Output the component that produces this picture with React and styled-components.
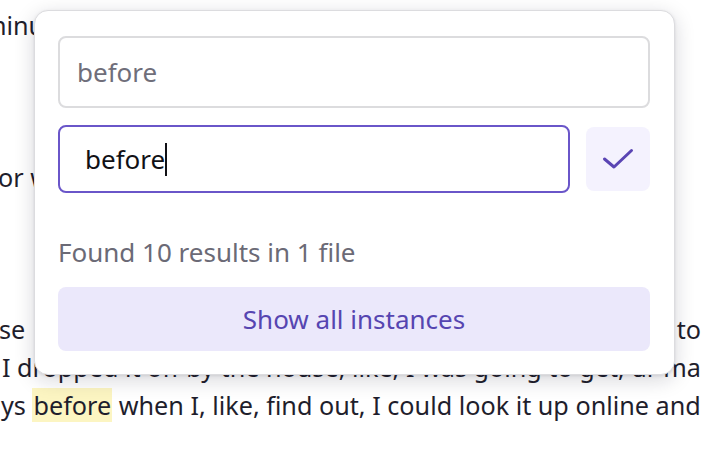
import React from 'react';
import styled, { createGlobalStyle } from 'styled-components';

const GlobalStyle = createGlobalStyle`
    html, body {
        margin: 0;
        padding: 0;
        background: #ffffff;
        overflow: hidden;
    }
    body {
        font-family: 'Noto Sans', 'Open Sans', sans-serif;
    }
`;

const Page = styled.div`
    position: relative;
    width: 706px;
    height: 460px;
    overflow: hidden;
    background: #ffffff;
`;

const Doc = styled.div`
    margin-top: -38px;
    font-size: 25.2px;
    line-height: 38px;
    color: #1f1e2c;
`;

const Line = styled.div`
    display: flex;
    justify-content: space-between;
    white-space: nowrap;
    height: ${(p) => p.$h || 38}px;
    margin-left: ${(p) => p.$shift || 0}px;
    padding-right: ${(p) => p.$end || 0}px;
`;

const Clip = styled.span`
    flex: 1;
    overflow: hidden;
    margin-right: 8px;
`;

const Mark = styled.span`
    background: #fcf5c2;
    padding: 0 1px;
`;

const Popover = styled.div`
    position: absolute;
    top: 10px;
    left: 34px;
    width: 641px;
    box-sizing: border-box;
    padding: 25px 24px 23px 23px;
    background: #ffffff;
    border: 1px solid #dcdcdf;
    border-radius: 14px;
    box-shadow: 0 5px 20px rgba(20, 20, 40, 0.17), 0 1px 3px rgba(20, 20, 40, 0.1);
    display: flex;
    flex-direction: column;
`;

const Field = styled.div`
    box-sizing: border-box;
    height: ${(p) => p.$height}px;
    flex: ${(p) => (p.$grow ? '1 1 auto' : 'none')};
    display: flex;
    align-items: center;
    padding-left: ${(p) => p.$pad}px;
    border: 2px solid ${(p) => (p.$active ? '#6a56c9' : '#dcdcde')};
    border-radius: 8px;
    font-size: 26px;
    color: ${(p) => (p.$placeholder ? '#6f6e7a' : '#111116')};
`;

const Caret = styled.span`
    display: inline-block;
    width: 2px;
    height: 33px;
    background: #111116;
`;

const Row = styled.div`
    display: flex;
    align-items: center;
    gap: 16px;
    margin-top: 17px;
`;

const CheckButton = styled.button`
    width: 64px;
    height: 64px;
    flex: none;
    border: none;
    border-radius: 8px;
    background: #f4f2fe;
    display: flex;
    align-items: center;
    justify-content: center;
    padding: 0;
`;

const Summary = styled.div`
    margin-top: 43px;
    margin-bottom: 19px;
    line-height: 32px;
    font-size: 26px;
    color: #6b6a76;
`;

const ShowAll = styled.button`
    height: 64px;
    flex: none;
    border: none;
    border-radius: 8px;
    background: #ebe8fb;
    color: #5645b1;
    font-family: inherit;
    font-size: 26px;
`;

const CheckIcon = () => (
    <svg width="32" height="32" viewBox="0 0 32 32" fill="none">
        <path
            d="M2.5 16 L12 24 L29.5 7.5"
            stroke="#5a45b4"
            strokeWidth="3"
            strokeLinecap="round"
            strokeLinejoin="round"
        />
    </svg>
);

const App = () => {
    return (
        <Page>
            <GlobalStyle />
            <Doc>
                <Line $h={44} $shift={40}>
                    <span>people thought it was going to be quite typically okay</span>
                </Line>
                <Line $shift={-17}>
                    <span>minutes later, and that was it.</span>
                </Line>
                <Line />
                <Line />
                <Line />
                <Line $shift={-2}>
                    <span>or whatever, I guess.</span>
                </Line>
                <Line />
                <Line />
                <Line />
                <Line $shift={-1} $end={5}>
                    <Clip>se{'\u00a0'} I never really wanted to go back</Clip>
                    <span>to</span>
                </Line>
                <Line $shift={2} $end={5}>
                    <Clip>I dropped it off by the house, like, I was going to get, um, my things, and,</Clip>
                    <span>ma</span>
                </Line>
                <Line $shift={1}>
                    <span>
                        ys <Mark>before</Mark> when I, like, find out, I could look it up online and
                    </span>
                </Line>
                <Line />
            </Doc>
            <Popover>
                <Field $height={72} $pad={17} $placeholder>
                    before
                </Field>
                <Row>
                    <Field $height={68} $pad={25} $active $grow>
                        before
                        <Caret />
                    </Field>
                    <CheckButton>
                        <CheckIcon />
                    </CheckButton>
                </Row>
                <Summary>Found 10 results in 1 file</Summary>
                <ShowAll>Show all instances</ShowAll>
            </Popover>
        </Page>
    );
};

export default App;
